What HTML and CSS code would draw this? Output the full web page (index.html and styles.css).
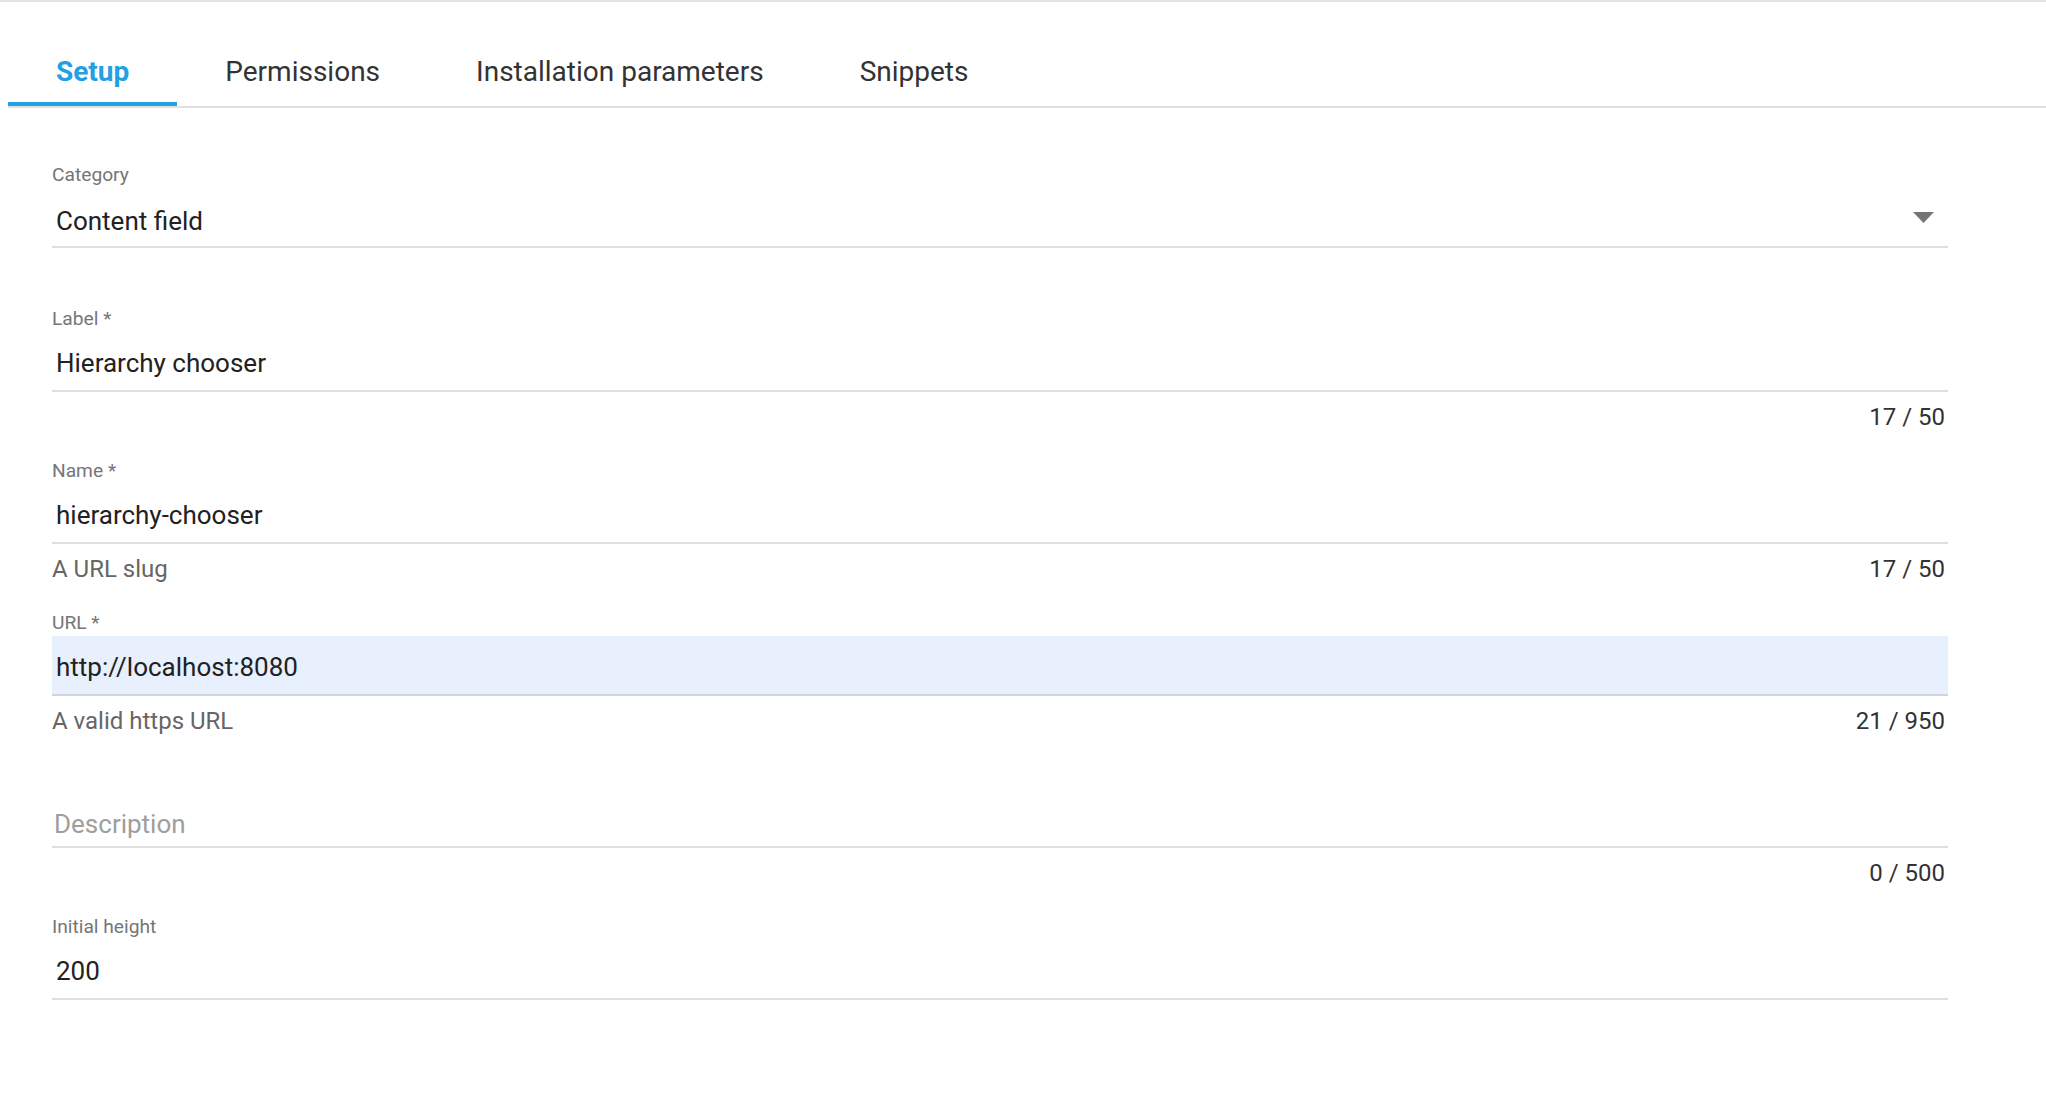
FILE: index.html
```html
<!DOCTYPE html>
<html lang="en">
<head>
<meta charset="utf-8">
<title>App definition – Setup</title>
<link rel="stylesheet" href="styles.css">
</head>
<body>
<div class="page">
  <nav class="tabs">
    <div class="tab tab-active">Setup</div>
    <div class="tab">Permissions</div>
    <div class="tab">Installation parameters</div>
    <div class="tab">Snippets</div>
  </nav>

  <form class="form">
    <div class="field field-select">
      <label class="field-label">Category</label>
      <div class="box box-select">
        <span class="value">Content field</span>
        <svg class="arrow" width="21" height="11" viewBox="0 0 21 11"><polygon points="0,0 21,0 10.5,11" fill="#757575"/></svg>
      </div>
    </div>

    <div class="field">
      <label class="field-label">Label *</label>
      <div class="box"><span class="value">Hierarchy chooser</span></div>
      <div class="helper-row"><span class="helper"></span><span class="counter">17 / 50</span></div>
    </div>

    <div class="field">
      <label class="field-label">Name *</label>
      <div class="box"><span class="value">hierarchy-chooser</span></div>
      <div class="helper-row"><span class="helper">A URL slug</span><span class="counter">17 / 50</span></div>
    </div>

    <div class="field">
      <label class="field-label">URL *</label>
      <div class="box box-autofill"><span class="value">http://localhost:8080</span></div>
      <div class="helper-row"><span class="helper">A valid https URL</span><span class="counter">21 / 950</span></div>
    </div>

    <div class="field">
      <label class="field-label"></label>
      <div class="box box-empty"><span class="value placeholder">Description</span></div>
      <div class="helper-row"><span class="helper"></span><span class="counter">0 / 500</span></div>
    </div>

    <div class="field">
      <label class="field-label">Initial height</label>
      <div class="box"><span class="value">200</span></div>
    </div>
  </form>
</div>
</body>
</html>
```

FILE: styles.css
```css
html, body {
  margin: 0;
  padding: 0;
  background: #ffffff;
}

body {
  font-family: Roboto, "Liberation Sans", Arial, sans-serif;
  color: #212121;
  border-top: 2px solid #e4e4e4;
}

.page {
  padding-left: 8px;
}

.tabs {
  display: flex;
  border-bottom: 2px solid #e0e0e0;
}

.tab {
  position: relative;
  padding: 52px 48px 16px;
  font-size: 28px;
  line-height: 36px;
  color: #333333;
  white-space: nowrap;
}

.tab-active {
  color: #21a0e4;
  font-weight: 700;
}

.tab-active::after {
  content: "";
  position: absolute;
  left: 0;
  right: 0;
  bottom: 0;
  height: 4px;
  background: #21a0e4;
}

.form {
  padding: 55px 98px 0 44px;
  display: flex;
  flex-direction: column;
}

.field {
  display: flex;
  flex-direction: column;
  margin-bottom: 28px;
}

.field-select {
  margin-bottom: 59px;
}

.field-label {
  display: block;
  height: 23px;
  font-size: 19.2px;
  line-height: 23px;
  color: #757575;
  margin-bottom: 2px;
}

.box {
  display: flex;
  align-items: flex-start;
  box-sizing: content-box;
  height: 30px;
  padding: 16px 3px 12px 4px;
  border-bottom: 2px solid #e0e0e0;
}

.box-select {
  padding-top: 18px;
  padding-bottom: 10px;
  justify-content: space-between;
}

.box-empty {
  padding-top: 21px;
  padding-bottom: 7px;
  padding-left: 2px;
}

.box-autofill {
  background: #e8f0fe;
  border-bottom-color: #cfd4dd;
}

.value {
  font-size: 26px;
  line-height: 30px;
  color: #212121;
  white-space: nowrap;
}

.placeholder {
  color: #9e9e9e;
}

.arrow {
  display: block;
  margin-top: 6px;
  margin-right: 11px;
}

.helper-row {
  display: flex;
  justify-content: space-between;
  margin-top: 11px;
  padding-right: 3px;
  font-size: 24px;
  line-height: 28px;
}

.helper {
  color: #666666;
}

.counter {
  color: #333333;
}
```
